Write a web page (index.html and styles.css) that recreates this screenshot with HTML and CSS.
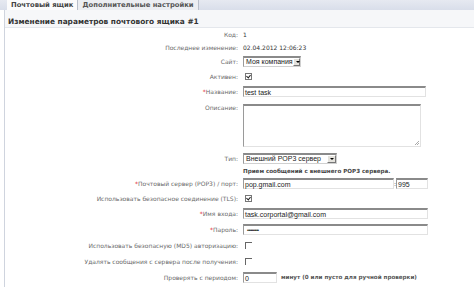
FILE: index.html
```html
<!DOCTYPE html>
<html>
<head>
  <title>Почтовый ящик</title>
  <link rel="stylesheet" href="styles.css">
</head>
<body>
  <div class="tabs">
    <span class="tab active">Почтовый ящик</span>
    <span class="tab">Дополнительные настройки</span>
  </div>

  <div class="panel">
    <div class="panel-head">Изменение параметров почтового ящика #1</div>

    <div class="form">
      <div class="row r13"><label>Код:</label><div class="val">1</div></div>
      <div class="row r13"><label>Последнее изменение:</label><div class="val">02.04.2012 12:06:23</div></div>
      <div class="row r14">
        <label>Сайт:</label>
        <div class="val"><span class="select site">Моя компания<span class="arrow"></span></span></div>
      </div>
      <div class="row r16"><label>Активен:</label><div class="val"><span class="check on"></span></div></div>
      <div class="row r15">
        <label><em>*</em>Название:</label>
        <div class="val"><span class="input wide">test task</span></div>
      </div>
      <div class="row top">
        <label>Описание:</label>
        <div class="val"><span class="textarea"></span></div>
      </div>
      <div class="row r12">
        <label>Тип:</label>
        <div class="val"><span class="select type">Внешний POP3 сервер<span class="arrow"></span></span></div>
      </div>
      <div class="row r13"><label></label><div class="val note">Прием сообщений с внешнего POP3 сервера.</div></div>
      <div class="row r13">
        <label><em>*</em>Почтовый сервер (POP3) / порт:</label>
        <div class="val">
          <span class="input server">pop.gmail.com</span><span class="colon">:</span><span class="input port">995</span>
        </div>
      </div>
      <div class="row r16"><label>Использовать безопасное соединение (TLS):</label><div class="val"><span class="check on"></span></div></div>
      <div class="row r15">
        <label><em>*</em>Имя входа:</label>
        <div class="val"><span class="input login">task.corportal@gmail.com</span></div>
      </div>
      <div class="row r16">
        <label><em>*</em>Пароль:</label>
        <div class="val"><span class="input login pass">••••••••••</span></div>
      </div>
      <div class="row r16"><label>Использовать безопасную (MD5) авторизацию:</label><div class="val"><span class="check"></span></div></div>
      <div class="row r16"><label>Удалять сообщения с сервера после получения:</label><div class="val"><span class="check"></span></div></div>
      <div class="row r16">
        <label>Проверять с периодом:</label>
        <div class="val"><span class="input period">0</span><span class="hint">минут (0 или пусто для ручной проверки)</span></div>
      </div>
    </div>
  </div>
</body>
</html>
```

FILE: styles.css
```css
body {
  margin: 0;
  background: #fff;
  font-family: 'DejaVu Sans', Verdana, sans-serif;
  font-size: 6px;
  color: #6a6a6a;
  overflow: hidden;
}

.tabs {
  height: 10px;
  display: flex;
  align-items: flex-end;
  padding-left: 7px;
  background: linear-gradient(#e6e9f1, #d9deea);
}

.tab {
  height: 10px;
  line-height: 10px;
  padding: 0 4px;
  white-space: nowrap;
  font-size: 6.8px;
  font-weight: bold;
  color: #555;
  background: #eceef2;
  border-right: 1px solid #b9bfcb;
}

.tab.active {
  background: #fbfbfc;
  color: #444;
}

.panel {
  margin-left: 4px;
  border-left: 1px solid #cfd4de;
  min-height: 277px;
}

.panel-head {
  height: 10px;
  line-height: 10px;
  padding: 7px 0 0 3px;
  font-size: 7.4px;
  font-weight: bold;
  color: #333;
  background: #f6f7f9;
  border-bottom: 1px solid #e4e7ec;
}

.row {
  display: grid;
  grid-template-columns: 233px 1fr;
  column-gap: 5px;
  align-items: center;
}

.row label {
  text-align: right;
  white-space: nowrap;
}

.row label em {
  font-style: normal;
  color: #d22;
}

.r12 { height: 12px; }
.r13 { height: 13px; }
.r14 { height: 14px; }
.r15 { height: 15px; }
.r16 { height: 16px; }
.r17 { height: 17px; }

.row.top {
  height: 48px;
  align-items: start;
  padding-top: 5px;
}

.val {
  display: flex;
  align-items: center;
  color: #333;
  white-space: nowrap;
}

.note {
  font-weight: bold;
  font-size: 5.6px;
  color: #444;
}

.input {
  box-sizing: border-box;
  height: 11px;
  line-height: 9px;
  padding-left: 1px;
  font-family: 'Liberation Sans', Arial, sans-serif;
  font-size: 7px;
  color: #222;
  background: #fff;
  border-top: 2px solid #8a8a8a;
  border-left: 1px solid #9a9a9a;
  border-right: 1px solid #e2e2e2;
  border-bottom: 1px solid #e2e2e2;
}

.input.wide { width: 183px; }
.input.server { width: 151px; }
.input.port { width: 32px; }
.input.login { width: 185px; }
.input.pass { font-size: 5px; letter-spacing: -0.6px; line-height: 9px; padding-left: 3px; }
.input.period { width: 34px; }

.colon {
  width: 2px;
  text-align: center;
  color: #333;
}

.hint {
  margin-left: 4px;
  font-weight: bold;
  font-size: 5.6px;
  color: #555;
}

.textarea {
  display: block;
  box-sizing: border-box;
  width: 178px;
  height: 43px;
  background: #fff;
  border-top: 2px solid #8a8a8a;
  border-left: 1px solid #9a9a9a;
  border-right: 1px solid #e2e2e2;
  border-bottom: 1px solid #e2e2e2;
  position: relative;
}

.textarea::after {
  content: "";
  position: absolute;
  right: 1px;
  bottom: 1px;
  width: 4px;
  height: 4px;
  background: linear-gradient(135deg, transparent 45%, #aaa 45%, #aaa 55%, transparent 55%, transparent 70%, #aaa 70%, #aaa 80%, transparent 80%);
}

.select {
  box-sizing: border-box;
  height: 11px;
  display: flex;
  align-items: center;
  justify-content: space-between;
  padding-left: 2px;
  font-family: 'Liberation Sans', Arial, sans-serif;
  font-size: 7px;
  color: #222;
  background: #fff;
  border-top: 2px solid #8a8a8a;
  border-left: 1px solid #9a9a9a;
  border-right: 1px solid #d0d0d0;
  border-bottom: 1px solid #d0d0d0;
}

.select.site { width: 58px; }
.select.type { width: 94px; }

.arrow {
  box-sizing: border-box;
  width: 9px;
  height: 8px;
  background: #e4e2dc;
  border: 1px solid;
  border-color: #fff #777 #777 #fff;
  position: relative;
}

.arrow::after {
  content: "";
  position: absolute;
  left: 2px;
  top: 2px;
  border-left: 2px solid transparent;
  border-right: 2px solid transparent;
  border-top: 2px solid #000;
}

.check {
  box-sizing: border-box;
  width: 7px;
  height: 7px;
  margin-left: 2px;
  border-top: 1px solid #666;
  border-left: 1px solid #666;
  position: relative;
}

.check.on {
  border: 1px solid #777;
}

.check.on::after {
  content: "";
  position: absolute;
  left: 1px;
  top: 0;
  width: 2px;
  height: 3px;
  border-right: 1px solid #222;
  border-bottom: 1px solid #222;
  transform: rotate(40deg);
}
```
